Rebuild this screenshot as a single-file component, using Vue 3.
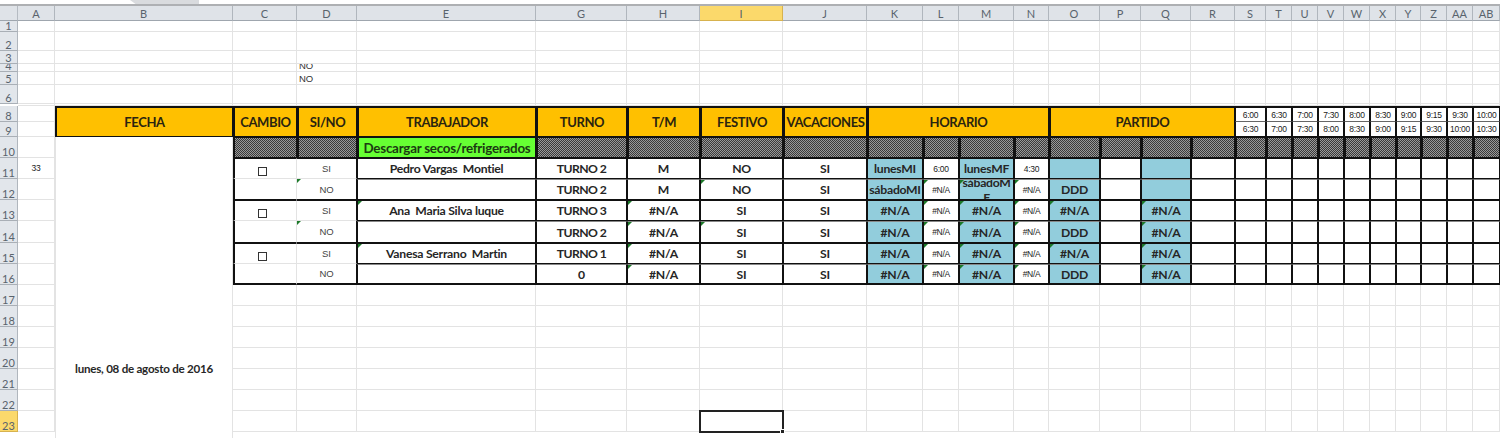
<script setup>
const colDefs = [['A',37],['B',178],['C',64],['D',60],['E',179],['G',91],['H',73],['I',83],['J',84],['K',56],['L',36],['M',55],['N',35],['O',51],['P',41],['Q',50],['R',44],['S',31],['T',26],['U',26],['V',26],['W',26],['X',26],['Y',25],['Z',26],['AA',26],['AB',27]]
const names = colDefs.map(c => c[0])
const idx = n => names.indexOf(n) + 2
const rowH = [11,19,13,8,13,19,2,16,15,21,21,21,21,22,21,21,21,21,21,21,21,21,21]

const gridStyle = {
  gridTemplateColumns: '18px ' + colDefs.map(c => c[1] + 'px').join(' '),
  gridTemplateRows: '15px ' + rowH.map(h => h + 'px').join(' ')
}

const cells = []
const add = (r, col, o = {}) => {
  const rs = o.rs || 1
  const cs = o.cs || 1
  cells.push({
    key: r + col,
    text: o.text || '',
    cls: o.cls || '',
    check: !!o.check,
    pos: { gridRow: `${r + 1} / span ${rs}`, gridColumn: `${idx(col)} / span ${cs}` }
  })
}

// column and row headings
const colHeads = colDefs.map(c => ({ name: c[0], pos: { gridRow: 1, gridColumn: idx(c[0]) } }))
const rowHeads = rowH.map((h, i) => ({ n: i + 1, pos: { gridRow: i + 2, gridColumn: 1 } })).filter(x => x.n !== 7)

// plain sheet cells
for (let r = 1; r <= 23; r++) {
  for (const n of names) {
    const inTable = r >= 8 && r <= 16 && n !== 'A'
    const merged = n === 'B' && r >= 10
    if (inTable || merged) continue
    const o = { cls: 'grid-line' }
    if (n === 'D' && (r === 4 || r === 5)) { o.text = 'NO'; o.cls += ' note' }
    if (n === 'A' && r === 11) { o.text = '33'; o.cls += ' tiny' }
    if (n === 'I' && r === 23) o.cls += ' selected'
    add(r, n, o)
  }
}

// merged date cell, runs on below the visible part of the sheet
add(10, 'B', { rs: 22, text: 'lunes, 08 de agosto de 2016', cls: 'grid-side bold date' })

// header band
const heads = [['B','FECHA',1],['C','CAMBIO',1],['D','SI/NO',1],['E','TRABAJADOR',1],['G','TURNO',1],['H','T/M',1],['I','FESTIVO',1],['J','VACACIONES',1],['K','HORARIO',4],['O','PARTIDO',4]]
for (const [c, t, cs] of heads) add(8, c, { rs: 2, cs, text: t, cls: 'head' })

const slots = ['S','T','U','V','W','X','Y','Z','AA','AB']
const from = ['6:00','6:30','7:00','7:30','8:00','8:30','9:00','9:15','9:30','10:00']
const to = ['6:30','7:00','7:30','8:00','8:30','9:00','9:15','9:30','10:00','10:30']
slots.forEach((s, i) => {
  add(8, s, { text: from[i], cls: 'slot slot-top tiny' })
  add(9, s, { text: to[i], cls: 'slot slot-bottom tiny' })
})

// hatched band
const tableCols = names.slice(names.indexOf('C'))
for (const n of tableCols) {
  if (n === 'E') add(10, n, { text: 'Descargar secos/refrigerados', cls: 'green bold' })
  else add(10, n, { cls: 'hatch' })
}

// data
const rows = {
  11: { E:'Pedro Vargas  Montiel', G:'TURNO 2', H:'M', I:'NO', J:'SI', K:'lunesMI', L:'6:00', M:'lunesMF', N:'4:30' },
  12: { G:'TURNO 2', H:'M', I:'NO', J:'SI', K:'sábadoMI', L:'#N/A', M:'sábadoM\nF', N:'#N/A', O:'DDD' },
  13: { E:'Ana  Maria Silva luque', G:'TURNO 3', H:'#N/A', I:'SI', J:'SI', K:'#N/A', L:'#N/A', M:'#N/A', N:'#N/A', O:'#N/A', Q:'#N/A' },
  14: { G:'TURNO 2', H:'#N/A', I:'SI', J:'SI', K:'#N/A', L:'#N/A', M:'#N/A', N:'#N/A', O:'DDD', Q:'#N/A' },
  15: { E:'Vanesa Serrano  Martin', G:'TURNO 1', H:'#N/A', I:'SI', J:'SI', K:'#N/A', L:'#N/A', M:'#N/A', N:'#N/A', O:'#N/A', Q:'#N/A' },
  16: { G:'0', H:'#N/A', I:'SI', J:'SI', K:'#N/A', L:'#N/A', M:'#N/A', N:'#N/A', O:'DDD', Q:'#N/A' }
}
const marks = { D:[12,14], E:[13,15], H:[13,14,15,16], I:[12,14], L:[12,13,14,15,16], M:[12,13,14,15,16], N:[12,13,14,15,16], O:[13,15], Q:[13,14,15,16] }
const blue = ['K','M','O','Q']
const small = ['L','N']

for (let r = 11; r <= 16; r++) {
  const odd = r % 2 === 1
  const edge = (odd ? 'row-top' : 'row-bottom') + (r === 16 ? ' row-last' : '')
  for (const n of tableCols) {
    const mark = marks[n] && marks[n].includes(r) ? ' mark' : ''
    if (n === 'C') {
      add(r, n, { check: odd, cls: `side-c ${edge}` })
    } else if (n === 'D') {
      add(r, n, { text: odd ? 'SI' : 'NO', cls: `side-d ${edge} answer${mark}` })
    } else {
      const text = rows[r][n] || ''
      let cls = `data ${edge}${mark}`
      if (blue.includes(n)) cls += ' blue'
      if (small.includes(n)) cls += ' tiny'
      else cls += ' bold value'
      if (text.startsWith('TURNO')) cls += ' caps'
      if (text.includes('\n')) cls += ' wrapped'
      add(r, n, { text, cls })
    }
  }
}
</script>

<template>
  <div class="app">
    <div class="topbar"><div class="tab"></div></div>
    <div class="sheet" :style="gridStyle">
      <div class="corner"></div>
      <div
        v-for="h in colHeads"
        :key="'col' + h.name"
        class="col-head"
        :class="{ active: h.name === 'I' }"
        :style="h.pos"
      >{{ h.name }}</div>
      <div
        v-for="h in rowHeads"
        :key="'row' + h.n"
        class="row-head"
        :class="{ active: h.n === 23 }"
        :style="h.pos"
      >{{ h.n }}</div>
      <div v-for="c in cells" :key="c.key" class="cell" :class="c.cls" :style="c.pos">
        <span v-if="c.check" class="check"></span>
        <template v-else>{{ c.text }}</template>
      </div>
    </div>
  </div>
</template>

<style scoped>
.app {
  width: 1500px;
  height: 438px;
  overflow: hidden;
  background: #fff;
  display: flex;
  flex-direction: column;
  font-family: Lato, "Liberation Sans", sans-serif;
}
.topbar {
  height: 6px;
  flex: none;
  box-sizing: border-box;
  border-bottom: 2px solid #aeb0b3;
  background: #fff;
}
.tab {
  width: 69px;
  height: 4px;
  margin-left: 130px;
  background: #d9dbde;
  clip-path: polygon(0 0, 100% 0, 100% 100%, 8% 100%);
}
.sheet {
  display: grid;
  grid-auto-rows: 21px;
  flex: none;
}
.corner {
  grid-row: 1;
  grid-column: 1;
  background: #dfe3e8;
  border-right: 1px solid #b5bbc2;
  border-bottom: 1px solid #9fa6ae;
  box-sizing: border-box;
}
.col-head {
  box-sizing: border-box;
  background: #dfe3e8;
  border-right: 1px solid #b0b6bd;
  border-bottom: 1px solid #9fa6ae;
  color: #59636d;
  font-size: 11px;
  display: flex;
  align-items: center;
  justify-content: center;
}
.row-head {
  box-sizing: border-box;
  background: #e2e6eb;
  border-right: 1px solid #b0b6bd;
  border-bottom: 1px solid #a9afb6;
  color: #59636d;
  font-size: 11px;
  line-height: 11px;
  display: flex;
  align-items: flex-end;
  justify-content: center;
  overflow: hidden;
}
.col-head.active,
.row-head.active {
  background: #fbd96b;
  border-color: #d7b24e;
}
.cell {
  box-sizing: border-box;
  position: relative;
  min-width: 0;
  min-height: 0;
  overflow: hidden;
  display: flex;
  align-items: center;
  justify-content: center;
  text-align: center;
  white-space: pre;
  color: #222;
  border: 0 solid #111;
  font-size: 12px;
}
.grid-line {
  border-right: 1px solid #e3e3e3;
  border-bottom: 1px solid #e3e3e3;
}
.grid-side {
  border-right: 1px solid #e3e3e3;
  border-left: 1px solid #e3e3e3;
}
.note {
  justify-content: flex-start;
  align-items: flex-end;
  line-height: 11px;
  padding-left: 2px;
  font-family: "Liberation Sans", sans-serif;
  font-size: 9.5px;
  color: #333;
}
.tiny {
  font-family: "Liberation Sans", sans-serif;
  font-size: 8.5px;
  font-weight: 400;
  letter-spacing: -0.3px;
  color: #222;
}
.bold {
  font-weight: 700;
  font-size: 12.2px;
  letter-spacing: -0.25px;
  color: #272727;
}
.date {
  font-size: 11.6px;
}
.selected {
  overflow: visible;
  outline: 2px solid #222;
  outline-offset: -1px;
  z-index: 2;
}
.selected::after {
  content: "";
  position: absolute;
  right: -3px;
  bottom: -3px;
  width: 3px;
  height: 3px;
  background: #222;
  border: 1px solid #fff;
}
.head {
  background: #ffc000;
  border-width: 2px 1px 1px 2px;
  font-weight: 700;
  font-size: 13px;
  letter-spacing: -0.4px;
  color: #2a2410;
}
.slot {
  border-left-width: 1px;
  border-right-width: 1px;
}
.slot-top {
  border-top-width: 2px;
  border-bottom: 1px solid #666;
}
.slot-bottom {
  border-bottom-width: 1px;
}
.green {
  background: #66ff33;
  border-width: 1px 1px 1px 2px;
  font-size: 13.4px;
  color: #1c3a12;
}
.hatch {
  background-color: #696969;
  background-image: repeating-conic-gradient(#3a3a3a 0 25%, #999 0 50%);
  background-size: 2px 2px;
  border-width: 1px 1px 1px 2px;
}
.row-top {
  border-top-width: 1px;
  border-bottom: 1px solid #111;
}
.row-bottom {
  border-top: 1px solid #888;
  border-bottom-width: 1px;
}
.row-last {
  border-bottom-width: 2px;
}
.data {
  border-left-width: 1px;
  border-right-width: 1px;
}
.side-c {
  border-left-width: 2px;
  border-right: 1px solid #e3e3e3;
}
.side-d {
  border-right-width: 1px;
}
.side-c.row-top,
.side-d.row-top {
  border-bottom: 1px solid #e3e3e3;
}
.side-c.row-bottom,
.side-d.row-bottom {
  border-top: 0;
}
.answer {
  font-family: "Liberation Sans", sans-serif;
  font-size: 9.5px;
  color: #444;
}
.value {
  color: #262626;
}
.caps {
  letter-spacing: -0.55px;
}
.blue {
  background: #92cddc;
}
.wrapped {
  line-height: 15px;
}
.mark::before {
  content: "";
  position: absolute;
  left: 0;
  top: 0;
  border-style: solid;
  border-width: 4px 4px 0 0;
  border-color: #1d7a2a transparent transparent transparent;
}
.check {
  width: 9px;
  height: 9px;
  box-sizing: border-box;
  border: 1px solid #333;
  background: #fff;
  margin: 6px 6px 0 0;
}
</style>

<style>
html, body {
  background: #fff;
}
</style>
